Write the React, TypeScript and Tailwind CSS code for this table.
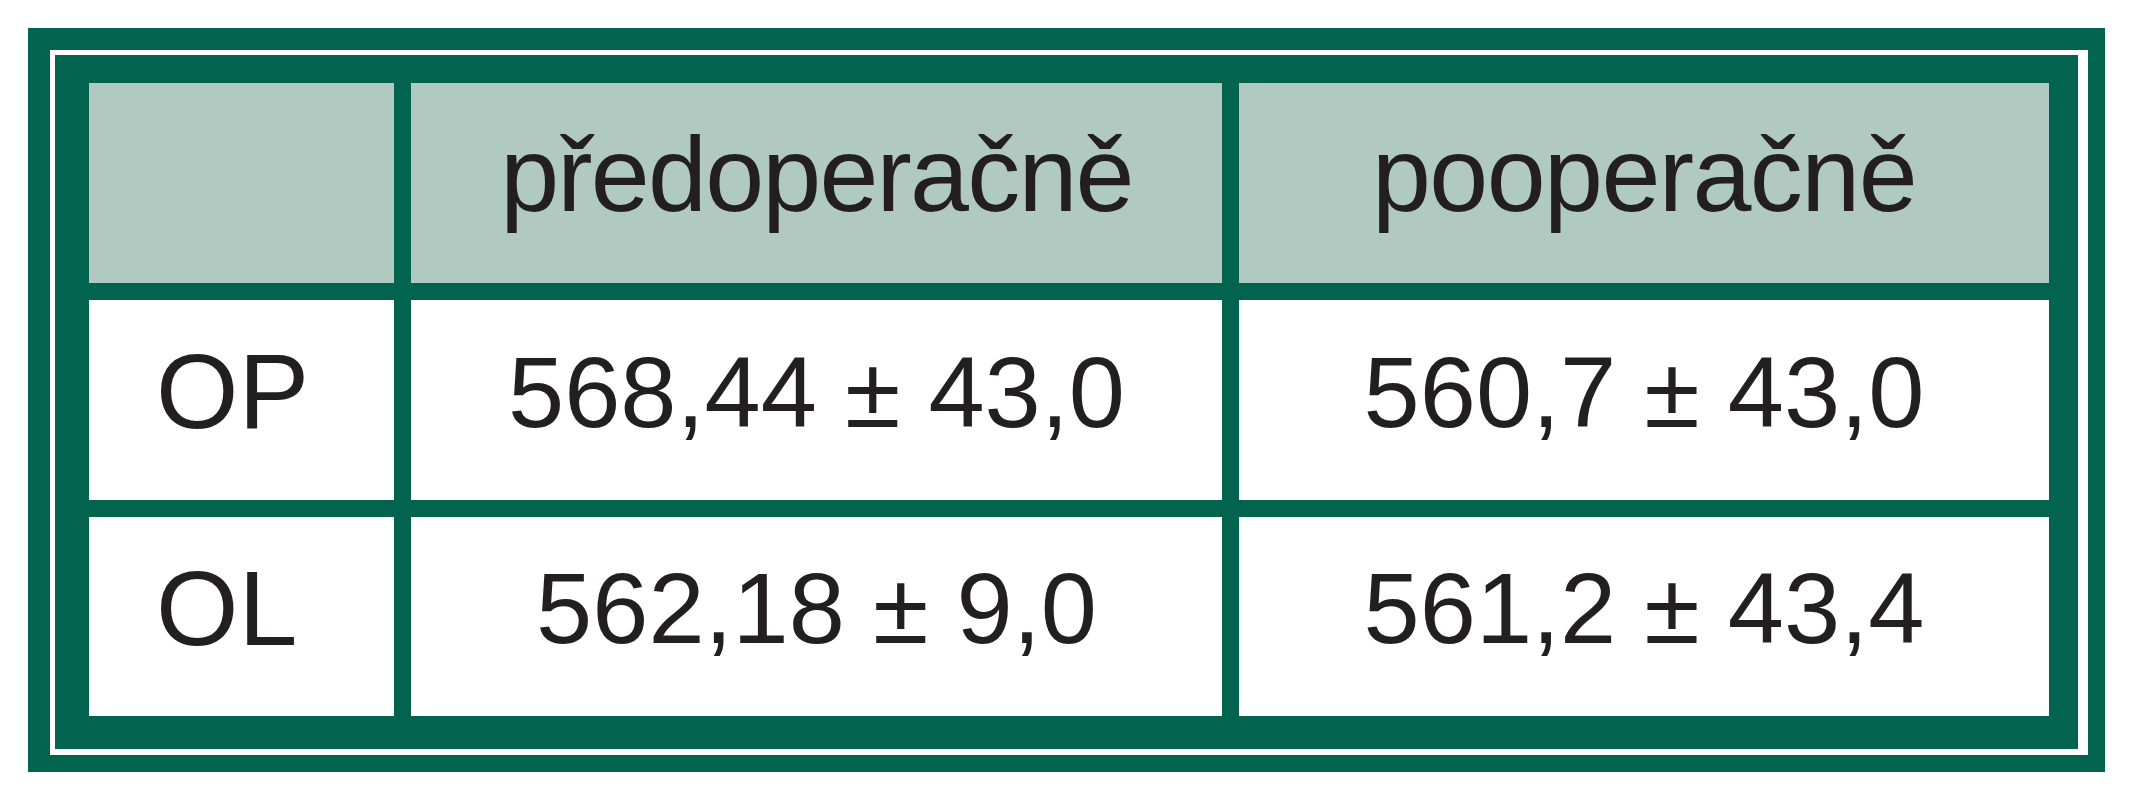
import React from "react";

const font = { fontFamily: '"Liberation Sans", Arial, Helvetica, sans-serif' };

export default function App() {
  return (
    <div className="min-h-[800px] w-[2133px] bg-white pl-[28px] pt-[28px]" style={font}>
      <div className="w-[2077px] bg-[#02634f] pl-[22px] pt-[22px] pr-[17px] pb-[17px]">
        <div className="bg-white pl-[5px] pt-[5px] pr-[10px] pb-[6px]">
          <div className="bg-[#02634f] pl-[34px] pt-[28px] pr-[29px] pb-[33px]">
            <div className="grid grid-cols-[305px_811px_810px] grid-rows-[200px_200px_199px] gap-[17px] text-[#231f20]">
              <div className="bg-[#b1cac1]" />
              <div className="flex items-center justify-center bg-[#b1cac1] pb-[18px] text-[106px] leading-none tracking-[-0.017em]">
                předoperačně
              </div>
              <div className="flex items-center justify-center bg-[#b1cac1] pb-[18px] text-[106px] leading-none tracking-[-0.015em]">
                pooperačně
              </div>

              <div className="flex items-center justify-start bg-white pl-[67px] pb-[18px] text-[106px] leading-none">
                OP
              </div>
              <div className="flex items-center justify-center bg-white pb-[16px] text-[101px] leading-none">
                568,44 ± 43,0
              </div>
              <div className="flex items-center justify-center bg-white pb-[16px] text-[101px] leading-none">
                560,7 ± 43,0
              </div>

              <div className="flex items-center justify-start bg-white pl-[67px] pb-[18px] text-[106px] leading-none">
                OL
              </div>
              <div className="flex items-center justify-center bg-white pb-[16px] text-[101px] leading-none">
                562,18 ± 9,0
              </div>
              <div className="flex items-center justify-center bg-white pb-[16px] text-[101px] leading-none">
                561,2 ± 43,4
              </div>
            </div>
          </div>
        </div>
      </div>
    </div>
  );
}
